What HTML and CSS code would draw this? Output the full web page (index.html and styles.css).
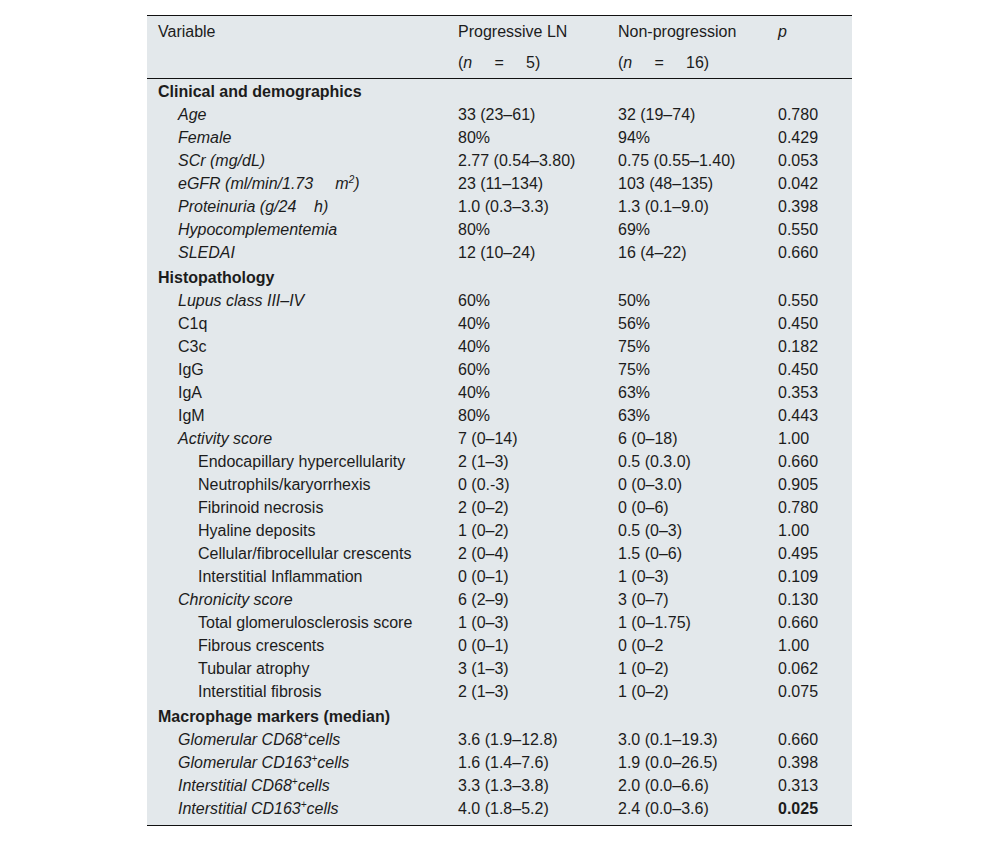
FILE: index.html
```html
<!DOCTYPE html>
<html lang="en">
<head>
<meta charset="utf-8">
<title>Table</title>
<link rel="stylesheet" href="styles.css">
</head>
<body>
<table class="data">
  <colgroup>
    <col class="c1"><col class="c2"><col class="c3"><col class="c4">
  </colgroup>
  <thead>
    <tr><th>Variable</th><th>Progressive LN</th><th>Non-progression</th><th><i>p</i></th></tr>
    <tr><th></th><th>(<i>n</i>&nbsp;&nbsp;&nbsp;&nbsp; =&nbsp;&nbsp;&nbsp;&nbsp; 5)</th><th>(<i>n</i>&nbsp;&nbsp;&nbsp;&nbsp; =&nbsp;&nbsp;&nbsp;&nbsp; 16)</th><th></th></tr>
  </thead>
  <tbody>
    <tr class="sec first"><td colspan="4">Clinical and demographics</td></tr>
    <tr><td class="l1 it">Age</td><td>33 (23–61)</td><td>32 (19–74)</td><td>0.780</td></tr>
    <tr><td class="l1 it">Female</td><td>80%</td><td>94%</td><td>0.429</td></tr>
    <tr><td class="l1 it">SCr (mg/dL)</td><td>2.77 (0.54–3.80)</td><td>0.75 (0.55–1.40)</td><td>0.053</td></tr>
    <tr><td class="l1 it">eGFR (ml/min/1.73&nbsp;&nbsp;&nbsp;&nbsp; m<sup>2</sup>)</td><td>23 (11–134)</td><td>103 (48–135)</td><td>0.042</td></tr>
    <tr><td class="l1 it">Proteinuria (g/24&nbsp;&nbsp;&nbsp; h)</td><td>1.0 (0.3–3.3)</td><td>1.3 (0.1–9.0)</td><td>0.398</td></tr>
    <tr><td class="l1 it">Hypocomplementemia</td><td>80%</td><td>69%</td><td>0.550</td></tr>
    <tr><td class="l1 it">SLEDAI</td><td>12 (10–24)</td><td>16 (4–22)</td><td>0.660</td></tr>
    <tr class="sec"><td colspan="4">Histopathology</td></tr>
    <tr><td class="l1 it">Lupus class III–IV</td><td>60%</td><td>50%</td><td>0.550</td></tr>
    <tr><td class="l1">C1q</td><td>40%</td><td>56%</td><td>0.450</td></tr>
    <tr><td class="l1">C3c</td><td>40%</td><td>75%</td><td>0.182</td></tr>
    <tr><td class="l1">IgG</td><td>60%</td><td>75%</td><td>0.450</td></tr>
    <tr><td class="l1">IgA</td><td>40%</td><td>63%</td><td>0.353</td></tr>
    <tr><td class="l1">IgM</td><td>80%</td><td>63%</td><td>0.443</td></tr>
    <tr><td class="l1 it">Activity score</td><td>7 (0–14)</td><td>6 (0–18)</td><td>1.00</td></tr>
    <tr><td class="l2">Endocapillary hypercellularity</td><td>2 (1–3)</td><td>0.5 (0.3.0)</td><td>0.660</td></tr>
    <tr><td class="l2">Neutrophils/karyorrhexis</td><td>0 (0.-3)</td><td>0 (0–3.0)</td><td>0.905</td></tr>
    <tr><td class="l2">Fibrinoid necrosis</td><td>2 (0–2)</td><td>0 (0–6)</td><td>0.780</td></tr>
    <tr><td class="l2">Hyaline deposits</td><td>1 (0–2)</td><td>0.5 (0–3)</td><td>1.00</td></tr>
    <tr><td class="l2">Cellular/fibrocellular crescents</td><td>2 (0–4)</td><td>1.5 (0–6)</td><td>0.495</td></tr>
    <tr><td class="l2">Interstitial Inflammation</td><td>0 (0–1)</td><td>1 (0–3)</td><td>0.109</td></tr>
    <tr><td class="l1 it">Chronicity score</td><td>6 (2–9)</td><td>3 (0–7)</td><td>0.130</td></tr>
    <tr><td class="l2">Total glomerulosclerosis score</td><td>1 (0–3)</td><td>1 (0–1.75)</td><td>0.660</td></tr>
    <tr><td class="l2">Fibrous crescents</td><td>0 (0–1)</td><td>0 (0–2</td><td>1.00</td></tr>
    <tr><td class="l2">Tubular atrophy</td><td>3 (1–3)</td><td>1 (0–2)</td><td>0.062</td></tr>
    <tr><td class="l2">Interstitial fibrosis</td><td>2 (1–3)</td><td>1 (0–2)</td><td>0.075</td></tr>
    <tr class="sec"><td colspan="4">Macrophage markers (median)</td></tr>
    <tr><td class="l1 it">Glomerular CD68<sup>+</sup>cells</td><td>3.6 (1.9–12.8)</td><td>3.0 (0.1–19.3)</td><td>0.660</td></tr>
    <tr><td class="l1 it">Glomerular CD163<sup>+</sup>cells</td><td>1.6 (1.4–7.6)</td><td>1.9 (0.0–26.5)</td><td>0.398</td></tr>
    <tr><td class="l1 it">Interstitial CD68<sup>+</sup>cells</td><td>3.3 (1.3–3.8)</td><td>2.0 (0.0–6.6)</td><td>0.313</td></tr>
    <tr class="last"><td class="l1 it">Interstitial CD163<sup>+</sup>cells</td><td>4.0 (1.8–5.2)</td><td>2.4 (0.0–3.6)</td><td><b>0.025</b></td></tr>
  </tbody>
</table>
</body>
</html>
```
FILE: styles.css
```css
html, body {
  margin: 0;
  padding: 0;
  background: #ffffff;
}

body {
  padding-top: 15px;
  font-family: "Liberation Sans", Arial, sans-serif;
  font-size: 16px;
  color: #1c1c1c;
}

.data {
  width: 705px;
  margin: 0 0 0 147px;
  border-collapse: collapse;
  table-layout: fixed;
  background: #e3e8eb;
  border-top: 1px solid #111;
  border-bottom: 1px solid #111;
}

.c1 { width: 300px; }
.c2 { width: 160px; }
.c3 { width: 160px; }
.c4 { width: 85px; }

.data th {
  font-weight: normal;
  text-align: left;
  height: 31px;
  padding: 0 0 0 11px;
  vertical-align: middle;
  line-height: 18px;
}

.data thead tr:last-child th {
  border-bottom: 1px solid #111;
}

.data td {
  padding: 4px 0 1px 11px;
  vertical-align: top;
  line-height: 18px;
  white-space: nowrap;
}

.data tr.sec td {
  font-weight: bold;
  padding-top: 6px;
}

.data tr.sec.first td {
  padding-top: 4px;
}

.data tr.last td {
  padding-bottom: 7px;
}

.data td.l1 { padding-left: 31px; }
.data td.l2 { padding-left: 51px; }
.it { font-style: italic; }

sup {
  font-size: 10px;
  line-height: 0;
  vertical-align: 6px;
}
```
